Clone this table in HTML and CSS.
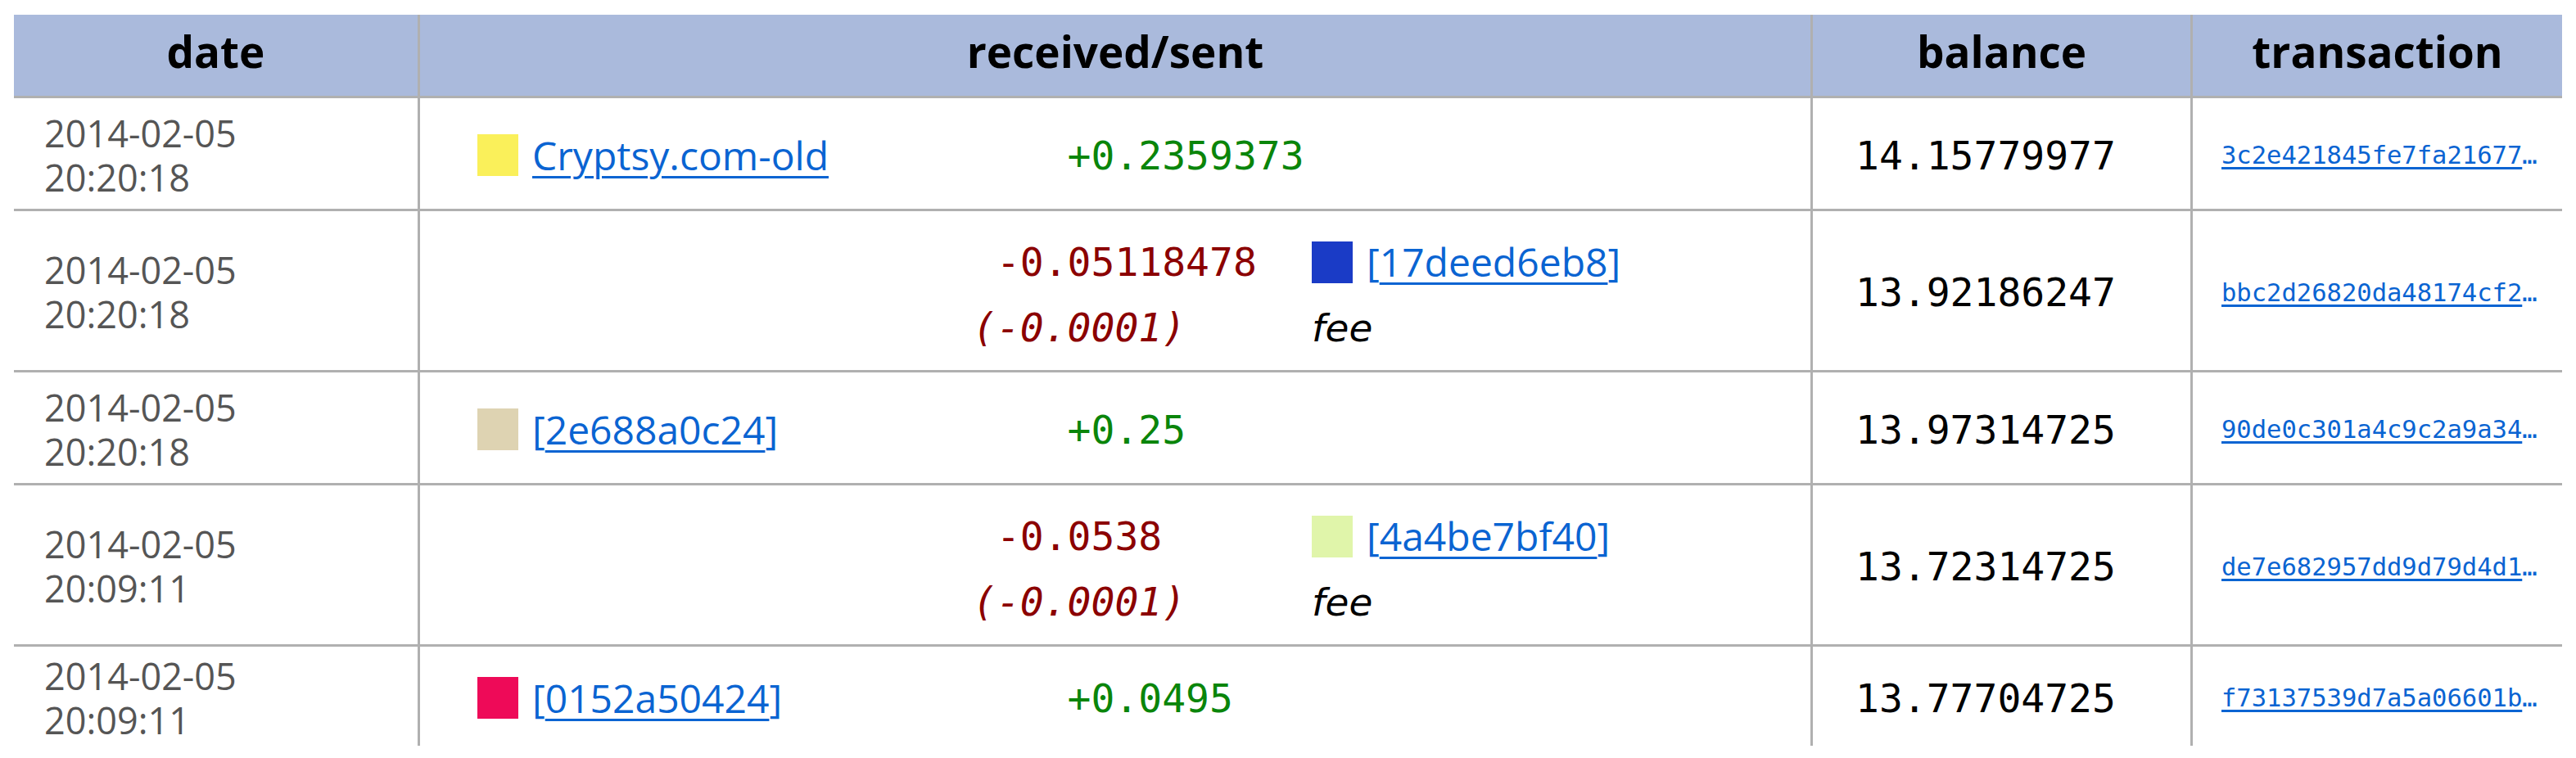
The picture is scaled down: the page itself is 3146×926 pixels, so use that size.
FILE: index.html
```html
<!DOCTYPE html>
<html>
<head>
    <meta charset="utf-8">
    <title>transactions</title>
    <link rel="stylesheet" href="styles.css">
</head>
<body>
    <table class="txs">
        <thead>
            <tr>
                <th class="c-date">date</th>
                <th class="c-flow">received/sent</th>
                <th class="c-bal">balance</th>
                <th class="c-tx">transaction</th>
            </tr>
        </thead>
        <tbody>
            <tr class="single">
                <td class="date">2014-02-05<br>20:20:18</td>
                <td class="flow">
                    <div class="line">
                        <div class="from"><span class="swatch" style="background:#faf05a"></span><span class="addr"><a href="#">Cryptsy.com-old</a></span></div>
                        <div class="amt in">+0.2359373</div>
                        <div class="to"></div>
                    </div>
                </td>
                <td class="bal">14.15779977</td>
                <td class="tx"><a href="#">3c2e421845fe7fa216775d0a3be1c8f49e02</a></td>
            </tr>
            <tr class="double">
                <td class="date">2014-02-05<br>20:20:18</td>
                <td class="flow">
                    <div class="line">
                        <div class="from"></div>
                        <div class="amt out">-0.05118478</div>
                        <div class="to"><span class="swatch" style="background:#1a3bc6"></span><span class="addr">[<a href="#">17deed6eb8</a>]</span></div>
                    </div>
                    <div class="line">
                        <div class="from"></div>
                        <div class="amt fee-amt">(-0.0001)</div>
                        <div class="to"><span class="fee">fee</span></div>
                    </div>
                </td>
                <td class="bal">13.92186247</td>
                <td class="tx"><a href="#">bbc2d26820da48174cf2e91b07a3d5c6f810</a></td>
            </tr>
            <tr class="single">
                <td class="date">2014-02-05<br>20:20:18</td>
                <td class="flow">
                    <div class="line">
                        <div class="from"><span class="swatch" style="background:#ded3b2"></span><span class="addr">[<a href="#">2e688a0c24</a>]</span></div>
                        <div class="amt in">+0.25</div>
                        <div class="to"></div>
                    </div>
                </td>
                <td class="bal">13.97314725</td>
                <td class="tx"><a href="#">90de0c301a4c9c2a9a34f7e6b15d2c08a913</a></td>
            </tr>
            <tr class="double">
                <td class="date">2014-02-05<br>20:09:11</td>
                <td class="flow">
                    <div class="line">
                        <div class="from"></div>
                        <div class="amt out">-0.0538</div>
                        <div class="to"><span class="swatch" style="background:#e0f5aa"></span><span class="addr">[<a href="#">4a4be7bf40</a>]</span></div>
                    </div>
                    <div class="line">
                        <div class="from"></div>
                        <div class="amt fee-amt">(-0.0001)</div>
                        <div class="to"><span class="fee">fee</span></div>
                    </div>
                </td>
                <td class="bal">13.72314725</td>
                <td class="tx"><a href="#">de7e682957dd9d79d4d1a06c3f8b25e7c401</a></td>
            </tr>
            <tr class="last">
                <td class="date">2014-02-05<br>20:09:11</td>
                <td class="flow">
                    <div class="line">
                        <div class="from"><span class="swatch" style="background:#ee0a58"></span><span class="addr">[<a href="#">0152a50424</a>]</span></div>
                        <div class="amt in">+0.0495</div>
                        <div class="to"></div>
                    </div>
                </td>
                <td class="bal">13.77704725</td>
                <td class="tx"><a href="#">f73137539d7a5a06601b8c2e4d9f70a35b16</a></td>
            </tr>
        </tbody>
    </table>
</body>
</html>
```

FILE: styles.css
```css
body {
	margin: 18px 0 0 17px;
	background: #fff;
	font-family: "Open Sans", "DejaVu Sans", sans-serif;
}
a {
	color: #0a64d2;
	text-decoration: underline;
	text-decoration-thickness: 3px;
	text-underline-offset: 7px;
}

.txs {
	width: 3112px;
	table-layout: fixed;
	border-collapse: separate;
	border-spacing: 0;
}
.txs th,
.txs td {
	box-sizing: border-box;
	padding: 0;
	vertical-align: middle;
}
.txs th + th,
.txs td + td {
	border-left: 3px solid #b0b0b0;
}

/* header */
.txs th {
	height: 99px;
	padding-bottom: 10px;
	background: #aabadc;
	color: #000;
	font: bold 53px "Open Sans", sans-serif;
	text-align: center;
}
.c-date { width: 493px; }
.c-flow { width: 1701px; }
.c-bal { width: 464px; }
.c-tx { width: 454px; }

/* rows */
.txs td {
	border-top: 3px solid #b0b0b0;
	padding-top: 4px;
}
.single td { height: 138px; }
.double td { height: 197px; }
.last td { height: 124px; }
.double .flow { padding-top: 10px; }

.date {
	padding-left: 37px !important;
	color: #555;
	font-size: 45px;
	line-height: 54px;
}

.flow {
	padding-left: 70px !important;
}
.line {
	display: grid;
	grid-template-columns: 605px 414px auto;
	align-items: center;
	height: 80px;
}
.from,
.to {
	display: flex;
	align-items: center;
	gap: 17px;
}
.swatch {
	display: inline-block;
	width: 50px;
	height: 51px;
}
.addr {
	color: #0a64d2;
	font-size: 48px;
	line-height: 66px;
	white-space: nowrap;
}

.amt {
	font: 48px "DejaVu Sans Mono", monospace;
	white-space: nowrap;
}
.amt.in {
	padding-left: 4ch;
	color: #0a850a;
}
.amt.out {
	padding-left: 1ch;
	color: #8b0000;
}
.amt.fee-amt {
	color: #8b0000;
	font-style: italic;
}
.fee {
	color: #000;
	font: italic 47px "DejaVu Sans", sans-serif;
}

.bal {
	padding-left: 52px !important;
	color: #000;
	font: 48px "DejaVu Sans Mono", monospace;
	white-space: nowrap;
}

.tx {
	padding-left: 35px !important;
}
.tx a {
	display: block;
	width: 392px;
	overflow: hidden;
	white-space: nowrap;
	text-overflow: ellipsis;
	font: 30.5px "DejaVu Sans Mono", monospace;
	text-underline-offset: 4px;
}
```
